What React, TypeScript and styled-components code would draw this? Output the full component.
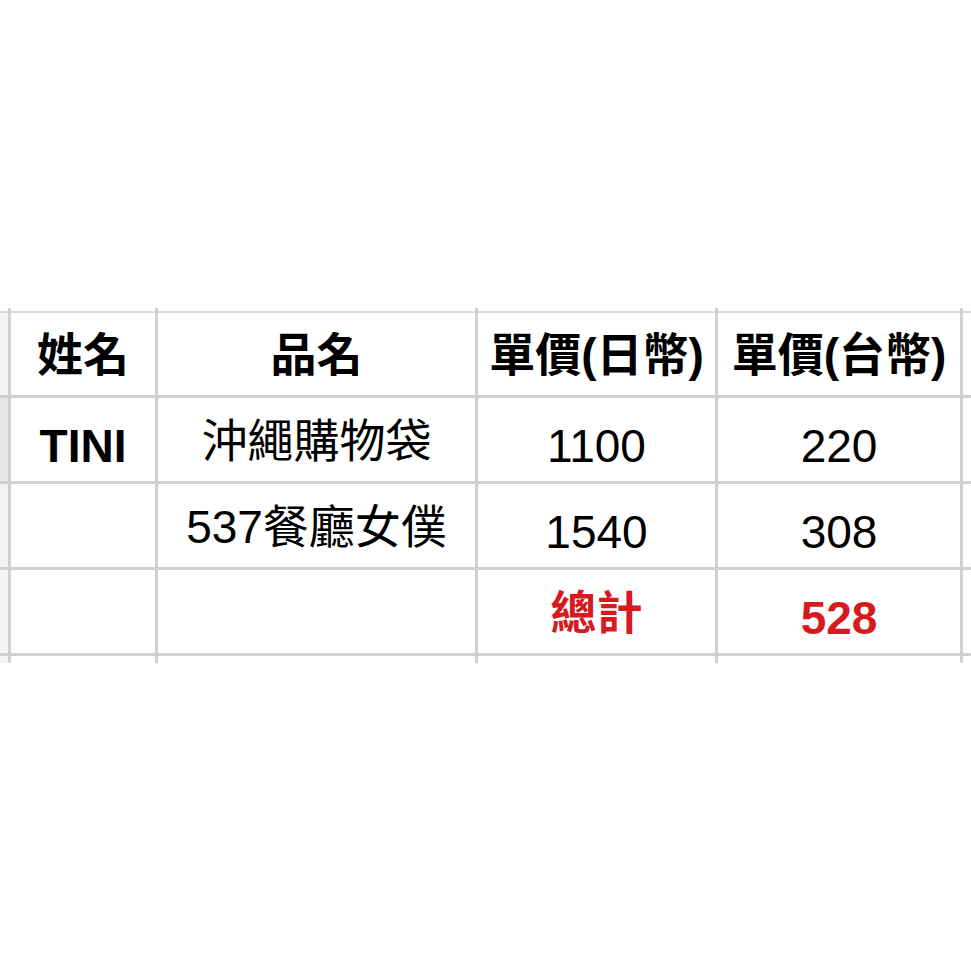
import React from "react";
import styled, { createGlobalStyle } from "styled-components";

const GlobalStyle = createGlobalStyle`
  html, body {
    margin: 0;
    padding: 0;
    background: #ffffff;
  }
  body {
    font-family: "Liberation Sans", "Noto Sans CJK TC", sans-serif;
    color: #000000;
  }
`;

const LINE = "#d0d0d0";

const Page = styled.div`
  width: 971px;
  height: 971px;
  padding-top: 308px;
  box-sizing: border-box;
  background: #ffffff;
`;

const Sheet = styled.div`
  display: grid;
  grid-template-columns: 8px 144px 317px 237px 242px 8px;
  grid-template-rows: 3px 84px 86px 86px 86px 10px;
  column-gap: 3px;
  background: ${LINE};
  width: 971px;
`;

const Row = styled.div`
  display: contents;
`;

type Edge = "none" | "light" | "line";

const edgeStyle = (e: Edge) =>
  e === "light"
    ? `border-top: 2px solid #dadada;`
    : e === "line"
    ? `border-top: 3px solid ${LINE};`
    : "";

const Cell = styled.div<{ $edge: Edge; $bold?: boolean; $red?: boolean; $cjk?: boolean }>`
  box-sizing: border-box;
  background: #ffffff;
  ${(p) => edgeStyle(p.$edge)}
  display: flex;
  align-items: flex-end;
  justify-content: center;
  padding-bottom: ${(p) => (p.$cjk ? 11 : 8)}px;
  font-size: 46px;
  line-height: normal;
  white-space: nowrap;
  overflow: hidden;
  font-weight: ${(p) => (p.$bold ? 700 : 400)};
  color: ${(p) => (p.$red ? "#d61a1f" : "#000000")};
`;

const RowHead = styled.div<{ $edge: Edge; $selected?: boolean; $blank?: boolean }>`
  box-sizing: border-box;
  ${(p) => edgeStyle(p.$edge)}
  background: ${(p) =>
    p.$blank ? "#ffffff" : p.$selected ? "#e6e6e6" : "#f3f3f3"};
`;

const EdgeCell = styled.div<{ $edge: Edge }>`
  box-sizing: border-box;
  background: #ffffff;
  ${(p) => edgeStyle(p.$edge)}
`;

type CellData = { text: string; bold?: boolean; red?: boolean };
type RowData = { edge: Edge; selected?: boolean; cells: CellData[] };

const rows: RowData[] = [
  {
    edge: "light",
    cells: [
      { text: "姓名", bold: true },
      { text: "品名", bold: true },
      { text: "單價(日幣)", bold: true },
      { text: "單價(台幣)", bold: true },
    ],
  },
  {
    edge: "line",
    selected: true,
    cells: [
      { text: "TINI", bold: true },
      { text: "沖繩購物袋" },
      { text: "1100" },
      { text: "220" },
    ],
  },
  {
    edge: "line",
    cells: [{ text: "" }, { text: "537餐廳女僕" }, { text: "1540" }, { text: "308" }],
  },
  {
    edge: "line",
    cells: [
      { text: "" },
      { text: "" },
      { text: "總計", bold: true, red: true },
      { text: "528", bold: true, red: true },
    ],
  },
];

const hasCjk = (s: string) => /[\u3400-\u9fff]/.test(s);

export default function App() {
  return (
    <>
      <GlobalStyle />
      <Page>
        <Sheet>
          <Row>
            <RowHead $edge="none" $blank />
            {[0, 1, 2, 3].map((i) => (
              <EdgeCell key={i} $edge="none" />
            ))}
            <EdgeCell $edge="none" />
          </Row>
          {rows.map((r, ri) => (
            <Row key={ri}>
              <RowHead $edge={r.edge} $selected={r.selected} />
              {r.cells.map((c, ci) => (
                <Cell
                  key={ci}
                  $edge={r.edge}
                  $bold={c.bold}
                  $red={c.red}
                  $cjk={hasCjk(c.text)}
                >
                  {c.text}
                </Cell>
              ))}
              <EdgeCell $edge={r.edge} />
            </Row>
          ))}
          <Row>
            <RowHead $edge="line" />
            {[0, 1, 2, 3].map((i) => (
              <EdgeCell key={i} $edge="line" />
            ))}
            <EdgeCell $edge="line" />
          </Row>
        </Sheet>
      </Page>
    </>
  );
}
